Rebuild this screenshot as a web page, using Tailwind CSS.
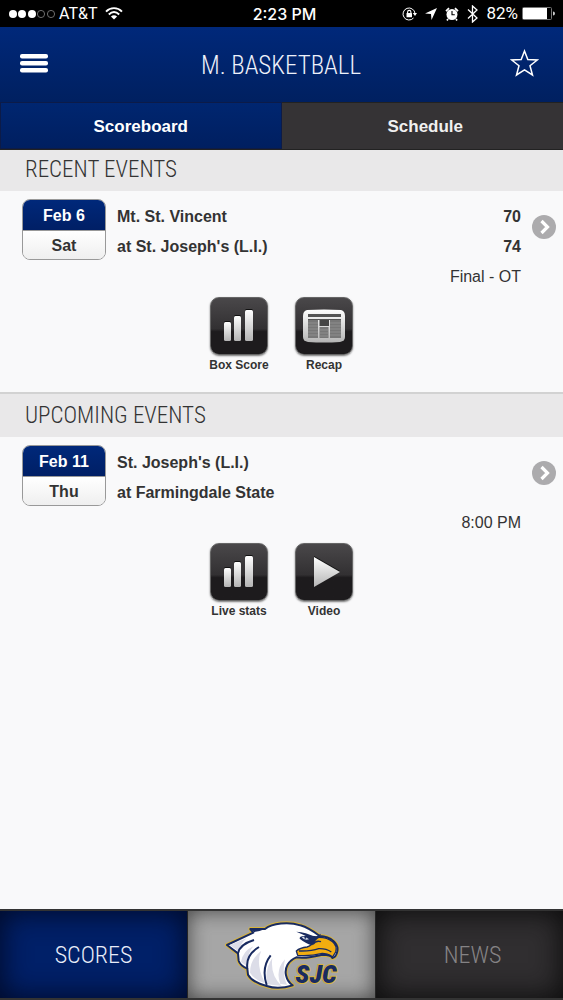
<!DOCTYPE html>
<html lang="en">
<head>
  <meta charset="UTF-8" />
  <meta name="viewport" content="width=device-width, initial-scale=1" />
  <title>M. Basketball | Scoreboard</title>
  <script src="https://cdn.jsdelivr.net/npm/@tailwindcss/browser@4"></script>
</head>
<body class="min-h-screen flex flex-col bg-[#f9f9fa] text-[#333] text-base font-['Liberation_Sans',Arial,sans-serif]">

  <!-- shared gradients -->
  <svg class="absolute w-0 h-0" aria-hidden="true">
    <defs>
      <linearGradient id="silver" x1="0" y1="0" x2="0" y2="1">
        <stop offset="0" stop-color="#fff" />
        <stop offset="1" stop-color="#b4b4b4" />
      </linearGradient>
    </defs>
  </svg>

  <!-- status bar -->
  <div class="h-[27px] bg-black text-white grid grid-cols-[1fr_auto_1fr] items-center">
    <div class="flex items-center pl-2">
      <svg class="w-[48px] h-[10px]" viewBox="0 0 48 10">
        <g fill="#fff"><circle cx="5" cy="5" r="4" /><circle cx="14" cy="5" r="4" /><circle cx="24" cy="5" r="4" /></g>
        <g fill="none" stroke="#888" stroke-width="0.8"><circle cx="33" cy="5" r="3.6" /><circle cx="43" cy="5" r="3.6" /></g>
      </svg>
      <span class="ml-[3px] text-base font-['Roboto','Liberation_Sans',sans-serif]">AT&amp;T</span>
      <svg class="ml-2 w-[18px] h-[13px]" viewBox="0 0 18 13" fill="none" stroke="#fff" stroke-width="1.9">
        <path d="M1 4.6C5.5 0 12.500 0 17 4.600" />
        <path d="M3.800 7.500C7 4.400 11 4.400 14.200 7.500" />
        <path d="M9 12.500L5.900 9.400Q9 7 12.100 9.400Z" fill="#fff" stroke="none" />
      </svg>
    </div>
    <span class="ml-1.5 text-base font-medium font-['Inter','Liberation_Sans',sans-serif]">2:23 PM</span>
    <div class="flex items-center justify-end pr-2">
      <svg class="w-[15px] h-[14px]" viewBox="0 0 15 14">
        <path d="M11.500 11A6 6 0 1 1 13 6.500" fill="none" stroke="#fff" stroke-width="1" />
        <path d="M10.800 6H15L13 9Z" fill="#fff" />
        <rect x="4.500" y="6" width="5.500" height="4.200" rx=".5" fill="#fff" />
        <path d="M5.600 6.500V5a1.650 1.650 0 0 1 3.300 0v1.500" fill="none" stroke="#fff" stroke-width="1.100" />
      </svg>
      <svg class="ml-2 w-[12px] h-[12px]" viewBox="0 0 12 12"><path d="M12 0L0 5.500L6 6L6.500 12Z" fill="#fff" /></svg>
      <svg class="ml-2 w-[14px] h-[14px]" viewBox="0 0 14 14">
        <circle cx="7" cy="7.500" r="5.500" fill="#fff" />
        <path d="M1 4.200L4 1.200M13 4.200L10 1.200M3 12L2 13.500M11 12L12 13.500" stroke="#fff" stroke-width="1.700" />
        <path d="M7 4V7.800H9.800" fill="none" stroke="#000" stroke-width="1.100" />
      </svg>
      <svg class="ml-2 w-[11px] h-[18px]" viewBox="0 0 11 18"><path d="M1 4.500L10 13L5.500 17V1L10 5L1 13.500" fill="none" stroke="#fff" stroke-width="1.300" /></svg>
      <span class="ml-2 text-[17px] font-['Roboto','Liberation_Sans',sans-serif]">82%</span>
      <svg class="ml-1 w-[33px] h-[13px]" viewBox="0 0 33 13">
        <rect x=".5" y=".5" width="29" height="12" rx="1" fill="none" stroke="#777" />
        <rect x="1" y="1" width="24" height="11" fill="#fff" />
        <path d="M31 4.500Q33 4.500 33 6.500T31 8.500Z" fill="#ccc" />
      </svg>
    </div>
  </div>

  <!-- title -->
  <header class="h-[75px] bg-linear-to-b from-[#00287a] to-[#002060] text-white flex items-center justify-between pl-5 pr-6">
    <button type="button" aria-label="Menu" class="w-[32px] h-[20px] mb-0.5">
      <svg class="w-[28px] h-[20px]" viewBox="0 0 28 20"><g fill="#fff"><rect x="0" y="0" width="28" height="4.500" rx="2" /><rect x="0" y="7" width="28" height="4.500" rx="2" /><rect x="0" y="14" width="28" height="4.500" rx="2" /></g></svg>
    </button>
    <h1 class="mt-0.5 text-[25px] leading-8 font-light font-['Roboto_Condensed','Liberation_Sans',sans-serif] text-[#eef1fa]">M. BASKETBALL</h1>
    <button type="button" aria-label="Favorite" class="w-[29px] h-[28px] mb-1">
      <svg class="w-[29px] h-[28px]" viewBox="0 0 29 28"><path d="M14.500 2L17.800 10.500L27.300 11L20 16.700L22.500 26L14.500 20.800L6.500 26L9 16.700L1.700 11L11.200 10.500Z" fill="none" stroke="#fff" stroke-width="1.500" /></svg>
    </button>
  </header>

  <nav class="h-[48px] grid grid-cols-2 text-white text-[17px] font-bold border-b border-[#222]">
    <button type="button" class="pt-0.5 bg-linear-to-b from-[#002670] to-[#001f60] border border-[#0c1b48]">Scoreboard</button>
    <button type="button" class="pt-0.5 pl-1.5 bg-[#353335] border-t border-[#222] text-[#f0f0f0]">Schedule</button>
  </nav>

  <main class="flex-1">
    <section>
      <h2 class="h-[41px] pl-[25px] flex items-center bg-[#e9e8e9] text-[23px] font-light font-['Roboto_Condensed','Liberation_Sans',sans-serif]">RECENT EVENTS</h2>
      <div class="relative h-[203px] pt-2 pl-[22px] pr-[42px] border-b-2 border-[#d2d2d2]">
        <div class="flex gap-[11px] font-bold">
          <div class="w-[84px] h-[61px] rounded-lg border border-[#999] overflow-hidden text-center leading-8">
            <div class="h-[31px] bg-linear-to-b from-[#00287a] to-[#001f65] text-white border-b border-[#999]">Feb 6</div>
            <div class="h-[30px] leading-[30px] bg-linear-to-b from-white to-[#eee]">Sat</div>
          </div>
          <div class="flex-1 pt-[3px] leading-[30px]">
            <div class="flex justify-between"><span>Mt. St. Vincent</span><span>70</span></div>
            <div class="flex justify-between"><span>at St. Joseph's (L.I.)</span><span>74</span></div>
            <div class="text-right font-normal">Final - OT</div>
          </div>
        </div>
        <div class="mt-[5px] -mr-5 flex justify-center gap-[27px] text-xs font-bold">
          <button type="button" class="w-[58px] flex flex-col items-center whitespace-nowrap">
            <span class="w-[58px] h-[58px] rounded-[9px] border border-[#666] bg-linear-to-b from-[#4a484a] from-0% via-[#323032] via-55% to-[#1d1b1d] to-60% shadow-[0_1px_2px_#777]">
              <svg class="w-full h-full" viewBox="0 0 56 56"><g fill="#111"><rect x="13" y="23" width="7" height="19" rx="1.500" /><rect x="23" y="17" width="7" height="25" rx="1.500" /><rect x="34" y="11" width="8" height="31" rx="1.500" /></g><g fill="url(#silver)"><rect x="13" y="24" width="7" height="19" rx="1.500" /><rect x="23" y="18" width="7" height="25" rx="1.500" /><rect x="34" y="12" width="8" height="31" rx="1.500" /></g></svg>
            </span>
            <span class="mt-0.5">Box Score</span>
          </button>
          <button type="button" class="w-[58px] flex flex-col items-center">
            <span class="w-[58px] h-[58px] rounded-[9px] border border-[#666] bg-linear-to-b from-[#4a484a] from-0% via-[#323032] via-55% to-[#1d1b1d] to-60% shadow-[0_1px_2px_#777]">
              <svg class="w-full h-full" viewBox="0 0 56 56">
                <path d="M11 12Q28 11 45 12Q49 13 49 18V39Q49 43 44 44Q28 45 12 44Q7 43 7 39V18Q7 13 11 12Z" fill="url(#silver)" />
                <path d="M12 16H45V19H12Z" fill="#555" />
                <path d="M12 21H22V40H12ZM34 21H45V40H34ZM23.500 29H32.500V40H23.500Z" fill="#777" />
                <path d="M23.500 22H33V28H23.500Z" fill="#444" />
                <path d="M12 21.500H45" stroke="#555" />
                <path d="M12 25H22M12 28H22M12 31H22M12 34H22M12 37H22M34 25H45M34 28H45M34 31H45M34 34H45M34 37H45M23.500 32H32.500M23.500 35H32.500M23.500 38H32.500" stroke="#999" stroke-width=".7" />
              </svg>
            </span>
            <span class="mt-0.5">Recap</span>
          </button>
        </div>
        <a href="#recent" aria-label="Event details" class="absolute right-[7px] top-6">
          <svg class="w-[24px] h-[24px]" viewBox="0 0 24 24"><circle cx="12" cy="12" r="12" fill="#acabad" /><path d="M9.500 6L15.500 12L9.500 18" fill="none" stroke="#fff" stroke-width="3.200" /></svg>
        </a>
      </div>
    </section>

    <section>
      <h2 class="h-[43px] pl-[25px] pt-0.5 flex items-center bg-[#e9e8e9] text-[23px] font-light font-['Roboto_Condensed','Liberation_Sans',sans-serif]">UPCOMING EVENTS</h2>
      <div class="relative h-[202px] pt-2 pl-[22px] pr-[42px]">
        <div class="flex gap-[11px] font-bold">
          <div class="w-[84px] h-[61px] rounded-lg border border-[#999] overflow-hidden text-center leading-8">
            <div class="h-[31px] bg-linear-to-b from-[#00287a] to-[#001f65] text-white border-b border-[#999]">Feb 11</div>
            <div class="h-[30px] leading-[30px] bg-linear-to-b from-white to-[#eee]">Thu</div>
          </div>
          <div class="flex-1 pt-[3px] leading-[30px]">
            <div>St. Joseph's (L.I.)</div>
            <div>at Farmingdale State</div>
            <div class="text-right font-normal">8:00 PM</div>
          </div>
        </div>
        <div class="mt-[5px] -mr-5 flex justify-center gap-[27px] text-xs font-bold">
          <button type="button" class="w-[58px] flex flex-col items-center whitespace-nowrap">
            <span class="w-[58px] h-[58px] rounded-[9px] border border-[#666] bg-linear-to-b from-[#4a484a] from-0% via-[#323032] via-55% to-[#1d1b1d] to-60% shadow-[0_1px_2px_#777]">
              <svg class="w-full h-full" viewBox="0 0 56 56"><g fill="#111"><rect x="13" y="23" width="7" height="19" rx="1.500" /><rect x="23" y="17" width="7" height="25" rx="1.500" /><rect x="34" y="11" width="8" height="31" rx="1.500" /></g><g fill="url(#silver)"><rect x="13" y="24" width="7" height="19" rx="1.500" /><rect x="23" y="18" width="7" height="25" rx="1.500" /><rect x="34" y="12" width="8" height="31" rx="1.500" /></g></svg>
            </span>
            <span class="mt-0.5">Live stats</span>
          </button>
          <button type="button" class="w-[58px] flex flex-col items-center">
            <span class="w-[58px] h-[58px] rounded-[9px] border border-[#666] bg-linear-to-b from-[#4a484a] from-0% via-[#323032] via-55% to-[#1d1b1d] to-60% shadow-[0_1px_2px_#777]">
              <svg class="w-full h-full" viewBox="0 0 56 56"><path d="M18 12L44 27L18 42Z" fill="#111" /><path d="M18 13L44 28L18 43Z" fill="url(#silver)" /></svg>
            </span>
            <span class="mt-0.5">Video</span>
          </button>
        </div>
        <a href="#upcoming" aria-label="Event details" class="absolute right-[7px] top-6">
          <svg class="w-[24px] h-[24px]" viewBox="0 0 24 24"><circle cx="12" cy="12" r="12" fill="#acabad" /><path d="M9.500 6L15.500 12L9.500 18" fill="none" stroke="#fff" stroke-width="3.200" /></svg>
        </a>
      </div>
    </section>
  </main>

  <!-- bottom bar -->
  <nav class="h-[91px] grid grid-cols-3 gap-px bg-[#252525] border-y-2 border-[#333] text-[24px] font-light font-['Roboto_Condensed','Liberation_Sans',sans-serif]">
    <a href="#scores" class="flex items-center justify-center bg-[#002068] text-[#e8ecf8] shadow-[inset_0_0_28px_2px_#000a28]">SCORES</a>
    <a href="#home" aria-label="Home" class="pl-1 flex items-center justify-center bg-[#a6a6a6] shadow-[inset_0_0_20px_#444]">
      <svg class="w-[117px] h-[70px]" viewBox="120 72 351 210">
        <!-- gold outline, then navy, then white head -->
        <g stroke-linejoin="round">
          <path d="M126 147L205 110L196 99L240 99C262 82 310 76 346 88C370 95 388 108 404 120C438 122 462 142 457 166C455 176 450 184 442 186C440 178 432 176 412 176C388 182 360 188 334 184C310 194 298 216 303 238C306 252 314 262 323 268C298 276 268 278 245 270C218 263 199 254 189 236L187 218C174 212 164 204 161 194L159 172Z" fill="#d7b33c" stroke="#d7b33c" stroke-width="12" />
          <path d="M126 147L205 110L196 99L240 99C262 82 310 76 346 88C370 95 388 108 404 120C438 122 462 142 457 166C455 176 450 184 442 186C440 178 432 176 412 176C388 182 360 188 334 184C310 194 298 216 303 238C306 252 314 262 323 268C298 276 268 278 245 270C218 263 199 254 189 236L187 218C174 212 164 204 161 194L159 172Z" fill="#fff" stroke="#192b60" stroke-width="6" />
          <path d="M134 147L185 127Q164 143 163 168ZM168 198Q174 164 205 151Q184 176 191 214ZM195 230Q195 190 229 164Q210 202 240 262Q208 252 195 230ZM246 265Q238 220 262 186Q255 238 290 270ZM286 264Q270 222 300 190Q290 234 306 266Z" fill="#dcdde8" />
          <path d="M159 172Q164 145 207 132M187 218Q181 178 222 153M245 267Q228 215 257 178" fill="none" stroke="#192b60" stroke-width="6" />
          <path d="M198 100L240 99Q224 106 207 108Z" fill="#192b60" />
          <path d="M350 124Q376 118 402 124C436 124 460 145 452 168L442 184Q438 174 412 172Q375 181 338 178L334 165Q345 155 366 153Q380 150 390 131Z" fill="#f2ad10" stroke="#192b60" stroke-width="4" />
          <path d="M342 165Q380 166 401 158Q423 157 439 168M384 145Q393 132 408 137" fill="none" stroke="#192b60" stroke-width="4" />
          <path d="M334 107Q362 108 391 123L408 113L403 125Q390 131 382 148Q364 144 344 128Q342 119 364 121Q347 112 334 107Z" fill="#192b60" />
          <path d="M350 124Q360 119 372 130Q358 134 350 124Z" fill="#dce3ee" />
          <circle cx="361" cy="125" r="3" fill="#192b60" />
        </g>
        <text x="331" y="261" font-family="Roboto Condensed, Roboto, Liberation Sans, sans-serif" font-size="79" font-weight="900" font-style="italic" fill="#192b60" stroke="#d7b33c" stroke-width="6" paint-order="stroke">SJC</text>
      </svg>
    </a>
    <a href="#news" class="pl-1.5 flex items-center justify-center bg-[#302e30] text-[#858385] shadow-[inset_0_0_28px_2px_#0c0c0c]">NEWS</a>
  </nav>
</body>
</html>
